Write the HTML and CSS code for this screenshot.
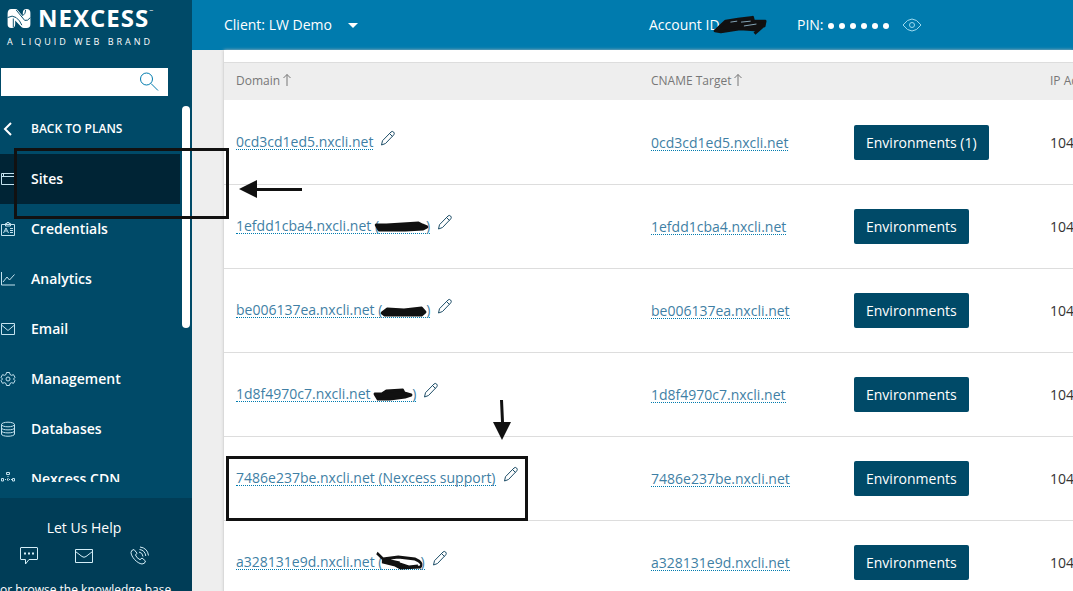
FILE: index.html
```html
<!DOCTYPE html>
<html lang="en">
<head>
<meta charset="utf-8">
<title>Nexcess - Sites</title>
<link rel="stylesheet" href="styles.css">
</head>
<body>
<svg class="defs" aria-hidden="true">
  <symbol id="pencil" viewBox="0 0 16 16"><path d="M1.500 15l1-4.300L11 2q1.300-1.200 2.600 0t.2 2.800L5.500 13.500zM9.500 3.500l3 3"/></symbol>
</svg>
<div class="app">
  <aside class="sidebar">
    <div class="brand">
      <div class="brand-row">
        <svg class="brand-mark" viewBox="0 0 24 20"><path fill="#fff" d="M0 5q0-5 4-5h4q2 0 3 1.500l5 6V4q0-4 4-4t4 4v12q0 4-4 4h-3q-2 0-3.500-2L8 12v4q0 4-4 4t-4-4z"/><path fill="none" stroke="#004a68" d="M0 9q5-3 9 0t6 8M6 19v-9M9 1l9 11q3 1 6-3M16 7q3-2 3-6"/></svg>
        <span class="brand-name">NEXCESS</span><span class="brand-tm">–</span>
      </div>
      <div class="brand-tag">A LIQUID WEB BRAND</div>
    </div>
    <form class="search">
      <input class="search-input" type="search" aria-label="Search">
      <button class="search-button" type="button" aria-label="Search"><svg viewBox="0 0 20 20"><circle cx="7.500" cy="7" r="6"/><path d="M12 11.500l7 7"/></svg></button>
    </form>
    <div class="nav-scroll">
      <nav class="nav">
        <a class="nav-item back" href="#"><svg viewBox="0 0 16 16"><path class="chevron" d="M11 2 5 8l6 6"/></svg>BACK TO PLANS</a>
        <a class="nav-item active" href="#"><svg viewBox="0 0 16 16"><path d="M14 2.500H1.500v11H14M1.500 5.500H14M3.500 2.500v3"/></svg>Sites</a>
        <a class="nav-item" href="#"><svg viewBox="0 0 16 16"><path d="M1.500 3.500h13v11h-13zM5.500 5V2.500h1.500V1.500h2v1h1.500V5zM3.500 12l2.500-5 2.500 5M5 10h2M10 7.500h3M10 9.500h3M10 11.500h3"/></svg>Credentials</a>
        <a class="nav-item" href="#"><svg viewBox="0 0 16 16"><path d="M1.500 1v13H15M3 11l4-5 2.500 3L14.500 3.500"/></svg>Analytics</a>
        <a class="nav-item" href="#"><svg viewBox="0 0 16 16"><path d="M1.500 2.500h13v11h-13zM1.500 4 8 9.500 14.500 4"/></svg>Email</a>
        <a class="nav-item" href="#"><svg viewBox="0 0 16 16"><path d="M6.500 1.500h3l.5 2 1.500.8 2-.6 1.500 2.600L13.500 8l1.500 1.700-1.500 2.600-2-.6-1.500.8-.5 2h-3l-.5-2-1.500-.8-2 .6L1 9.700 2.500 8 1 6.300l1.500-2.600 2 .6L6 3.500z"/><circle cx="8" cy="8" r="2"/></svg>Management</a>
        <a class="nav-item" href="#"><svg viewBox="0 0 16 16"><ellipse cx="8" cy="3.500" rx="6.500" ry="2.300"/><path d="M1.500 3.500v9.500c0 3 13 3 13 0V3.500M1.500 7c0 2.500 13 2.500 13 0M1.500 10c0 2.500 13 2.500 13 0"/></svg>Databases</a>
        <a class="nav-item" href="#"><svg viewBox="0 0 16 16"><path d="M6.500 1.500h3v2h-3zM1.500 7.500h2v2.500h-2zM12.500 7.500h2v2.500h-2zM7 12.500h2v2H7z"/><path stroke-dasharray="1 1" d="M8 5v7M5 8.500h7"/></svg>Nexcess CDN</a>
      </nav>
      <div class="scroll-track"><div class="scroll-thumb"></div></div>
    </div>
    <div class="help">
      <div class="help-title">Let Us Help</div>
      <div class="help-icons">
        <a href="#" aria-label="Chat"><svg viewBox="0 0 20 20"><path d="M2 1.500h16q.5 0 .5.500v11q0 .5-.5.500H10L6.500 18v-4.500H2q-.5 0-.5-.5V2q0-.5.500-.5z"/><path class="dots" d="M5 7.500h2M9 7.500h2M13 7.500h2"/></svg></a>
        <a href="#" aria-label="Email"><svg viewBox="0 0 20 20"><path d="M1.500 3.500h17v13h-17zM1.500 5.500 8 10.500q2 1.500 4 0l6.500-5"/></svg></a>
        <a href="#" aria-label="Phone"><svg viewBox="0 0 20 20"><path d="M5 3.500q-3 .5-3 3c0 4 6 11 11 11.500q3 0 3.500-3L13 12l-2 1.700Q7.500 12 6.500 9L8 7.200zM10 6q3.500.5 4 4.500M10.500 3.500q5.500.7 6.300 6.500M11 1q7.500 1 8.500 8.500"/></svg></a>
      </div>
      <a class="help-link" href="#">or browse the knowledge base</a>
    </div>
  </aside>
  <div class="main">
    <header class="topbar">
      <button class="client" type="button">Client: LW Demo <span class="caret"></span></button>
      <div class="account">Account ID<svg class="account-mark" viewBox="0 0 52 22"><path class="ink" d="M-2 17 9 7l13-2 15-2 1 4 12 0-1 5-10 4-15-1-20 3zM39 20l9-8"/><path class="ink-gap" d="M14 8l7-1M25 8l10-1M28 12l13-2"/></svg></div>
      <div class="pin">PIN: <span class="pin-dots"><i></i><i></i><i></i><i></i><i></i><i></i></span></div>
      <button class="eye" type="button" aria-label="Show PIN"><svg viewBox="0 0 20 14"><path d="M1 7q9-12 18 0-9 12-18 0z"/><circle cx="10" cy="7" r="2.500"/></svg></button>
    </header>
    <div class="content">
      <table class="sites">
        <colgroup><col class="col-domain"><col class="col-cname"><col class="col-env"><col></colgroup>
        <thead><tr><th>Domain<svg class="sort" viewBox="0 0 10 14"><path d="M5 13V1.500M1.500 5 5 1.500 8.500 5"/></svg></th><th>CNAME Target<svg class="sort" viewBox="0 0 10 14"><path d="M5 13V1.500M1.500 5 5 1.500 8.500 5"/></svg></th><th></th><th>IP Address</th></tr></thead>
        <tbody>
          <tr><td><a class="link" href="#">0cd3cd1ed5.nxcli.net</a><button class="edit" type="button" aria-label="Edit"><svg><use href="#pencil"/></svg></button></td><td><a class="link" href="#">0cd3cd1ed5.nxcli.net</a></td><td><button class="env" type="button">Environments (1)</button></td><td>104.</td></tr>
          <tr><td><a class="link" href="#">1efdd1cba4.nxcli.net (<svg class="mark wide" viewBox="0 0 50 12" preserveAspectRatio="none"><path class="ink" d="M-3 4h11L42 2l4 2 5 2-4 2-19 1H0z"/></svg>)</a><button class="edit" type="button" aria-label="Edit"><svg><use href="#pencil"/></svg></button></td><td><a class="link" href="#">1efdd1cba4.nxcli.net</a></td><td><button class="env" type="button">Environments</button></td><td>104.</td></tr>
          <tr><td><a class="link" href="#">be006137ea.nxcli.net (<svg class="mark" viewBox="0 0 50 12" preserveAspectRatio="none"><path class="ink" d="M0 8 6 4l19 1 20-2 4 4-4 3H3z"/></svg>)</a><button class="edit" type="button" aria-label="Edit"><svg><use href="#pencil"/></svg></button></td><td><a class="link" href="#">be006137ea.nxcli.net</a></td><td><button class="env" type="button">Environments</button></td><td>104.</td></tr>
          <tr><td><a class="link" href="#">1d8f4970c7.nxcli.net <svg class="mark short" viewBox="0 0 50 12" preserveAspectRatio="none"><path class="ink" d="M1 5h9l6-3 22-1 2 3 9 2-8 2-20 2H5z"/></svg>)</a><button class="edit" type="button" aria-label="Edit"><svg><use href="#pencil"/></svg></button></td><td><a class="link" href="#">1d8f4970c7.nxcli.net</a></td><td><button class="env" type="button">Environments</button></td><td>104.</td></tr>
          <tr><td><a class="link" href="#">7486e237be.nxcli.net (Nexcess support)</a><button class="edit" type="button" aria-label="Edit"><svg><use href="#pencil"/></svg></button></td><td><a class="link" href="#">7486e237be.nxcli.net</a></td><td><button class="env" type="button">Environments</button></td><td>104.</td></tr>
          <tr><td><a class="link" href="#">a328131e9d.nxcli.net (<svg class="mark short" viewBox="0 0 50 12" preserveAspectRatio="none"><path class="ink-line" d="M-8-4 0 2 20 0 42 2q12 4 7 8l-26 1L16 8 0 5 0 2 14 5l20 5 12-1M0 4l28 5M4 3l18 3"/></svg>)</a><button class="edit" type="button" aria-label="Edit"><svg><use href="#pencil"/></svg></button></td><td><a class="link" href="#">a328131e9d.nxcli.net</a></td><td><button class="env" type="button">Environments</button></td><td>104.</td></tr>
        </tbody>
      </table>
    </div>
  </div>
</div>
<div class="callout callout-nav"></div>
<div class="callout callout-row"></div>
<svg class="arrow arrow-left" viewBox="0 0 64 20"><path d="M0 10 18 1v8h45v3H18v7z"/></svg>
<svg class="arrow arrow-down" viewBox="0 0 20 42"><path d="M8 1h3l1 22h7l-9 18L1 23h8z"/></svg>
</body>
</html>
```
FILE: styles.css
```css
* { box-sizing: border-box; }
body { margin: 0; overflow: hidden; background: #eee; font: 14px/20px "Open Sans", sans-serif; color: #333; }
a { color: inherit; text-decoration: none; }
button { font: inherit; border: 0; padding: 0; background: none; color: inherit; cursor: pointer; }
svg { fill: none; stroke: currentColor; overflow: visible; }
.defs { position: absolute; width: 0; height: 0; }
.app { display: grid; grid-template-columns: 192px 1fr; height: 100vh; }

.sidebar { display: flex; flex-direction: column; min-height: 0; overflow: hidden; background: #004a68; color: #fff; }
.brand { padding: 4px 0 0 7px; }
.brand-row { display: flex; align-items: center; height: 28px; }
.brand-mark { width: 24px; height: 19px; stroke: none; margin-right: 7px; }
.brand-name { font: 700 24px/28px "Open Sans", sans-serif; letter-spacing: 1px; }
.brand-tm { align-self: flex-start; font-size: 8px; line-height: 10px; }
.brand-tag { font-size: 9px; line-height: 20px; letter-spacing: 3px; white-space: nowrap; }
.search { display: flex; flex: none; height: 28px; margin: 16px 24px 8px 1px; background: #fff; }
.search-input { flex: 1; min-width: 0; border: 0; padding: 0 8px; background: none; font: inherit; outline: 0; }
.search-button { width: 38px; color: #007bae; }
.search-button svg { display: block; width: 20px; height: 20px; margin-left: 9px; }
.nav-scroll { display: flex; gap: 2px; flex: 0 0 64vh; overflow: hidden; }
.nav { flex: 1; }
.nav-item { display: flex; align-items: center; gap: 15px; height: 50px; font-weight: 600; }
.nav-item svg { width: 16px; height: 16px; stroke: #c4e2ee; }
.nav-item.back { font-size: 12px; }
.nav-item .chevron { stroke: #fff; stroke-width: 2; }
.nav-item.active { background: #002435; }
.scroll-track { width: 10px; padding: 2px 2px 0 0; }
.scroll-thumb { height: 59%; border-radius: 4px; background: #fff; }
.help { flex: none; margin-top: 16px; padding-top: 18px; background: #003d57; }
.help-title { padding-right: 24px; line-height: 24px; text-align: center; }
.help-icons { display: flex; justify-content: space-between; margin: 6px 43px 14px 19px; color: #d4eef7; }
.help-icons svg { display: block; width: 20px; height: 20px; }
.help-icons .dots { stroke-width: 2; }
.help-link { display: block; font-size: 12px; white-space: nowrap; }

.main { min-width: 0; overflow: hidden; }
.topbar { display: flex; align-items: center; height: 50px; padding: 0 32px; background: #007bae; color: #fff; }
.client { display: flex; align-items: center; gap: 16px; width: 425px; }
.caret { border: 5px solid transparent; border-top-color: #fff; border-bottom: 0; }
.account { display: flex; align-items: center; width: 148px; white-space: nowrap; }
.account-mark { width: 50px; height: 22px; margin-left: -3px; }
.pin { display: flex; align-items: center; gap: 4px; }
.pin-dots { display: flex; gap: 5px; padding-top: 2px; }
.pin-dots i { width: 6px; height: 6px; border-radius: 50%; background: #fff; }
.eye { margin-left: 13px; color: #9cd9ee; }
.eye svg { display: block; width: 20px; height: 14px; }

.content { margin-left: 32px; padding-top: 12px; background: #fff; box-shadow: 0 0 3px #bbb; }
.sites { width: 100%; table-layout: fixed; border-collapse: separate; border-spacing: 0; }
.col-domain { width: 415px; }
.col-cname { width: 203px; }
.col-env { width: 196px; }
.sites th { height: 39px; padding: 0 0 2px 12px; border-top: 1px solid #ddd; border-bottom: 1px solid #fff; background: #eee; color: #777; font-size: 12px; font-weight: 400; text-align: left; white-space: nowrap; overflow: hidden; }
.sort { width: 10px; height: 14px; margin-left: 2px; vertical-align: -2px; }
.sites td { height: 84px; padding: 0 0 0 12px; border-bottom: 1px solid #ddd; white-space: nowrap; overflow: hidden; }
.sites td:first-child { padding-bottom: 3px; }
.link { display: inline-block; color: #3f7fa5; border-bottom: 1px dotted #007bae; line-height: 15px; }
.edit { margin-left: 7px; color: #1e4e68; vertical-align: 1px; }
.edit svg { display: block; width: 16px; height: 16px; }
.env { height: 35px; padding: 0 12px; border-radius: 2px; background: #004a68; color: #fff; }
.mark { width: 44px; height: 12px; vertical-align: -2px; }
.mark.wide { width: 47px; }
.mark.short { width: 38px; }
.ink { fill: #111; stroke: #111; stroke-width: 3; stroke-linejoin: round; }
.ink-line { stroke: #111; stroke-width: 3; }
.ink-gap { stroke: #8ab; stroke-width: 1; }

.callout { position: absolute; border: 3px solid #111; pointer-events: none; }
.callout-nav { left: 14px; top: 148px; width: 215px; height: 71px; }
.callout-row { left: 226px; top: 456px; width: 302px; height: 65px; }
.arrow { position: absolute; fill: #111; stroke: none; }
.arrow-left { left: 239px; top: 179px; width: 64px; height: 20px; }
.arrow-down { left: 492px; top: 399px; width: 20px; height: 42px; }
```
